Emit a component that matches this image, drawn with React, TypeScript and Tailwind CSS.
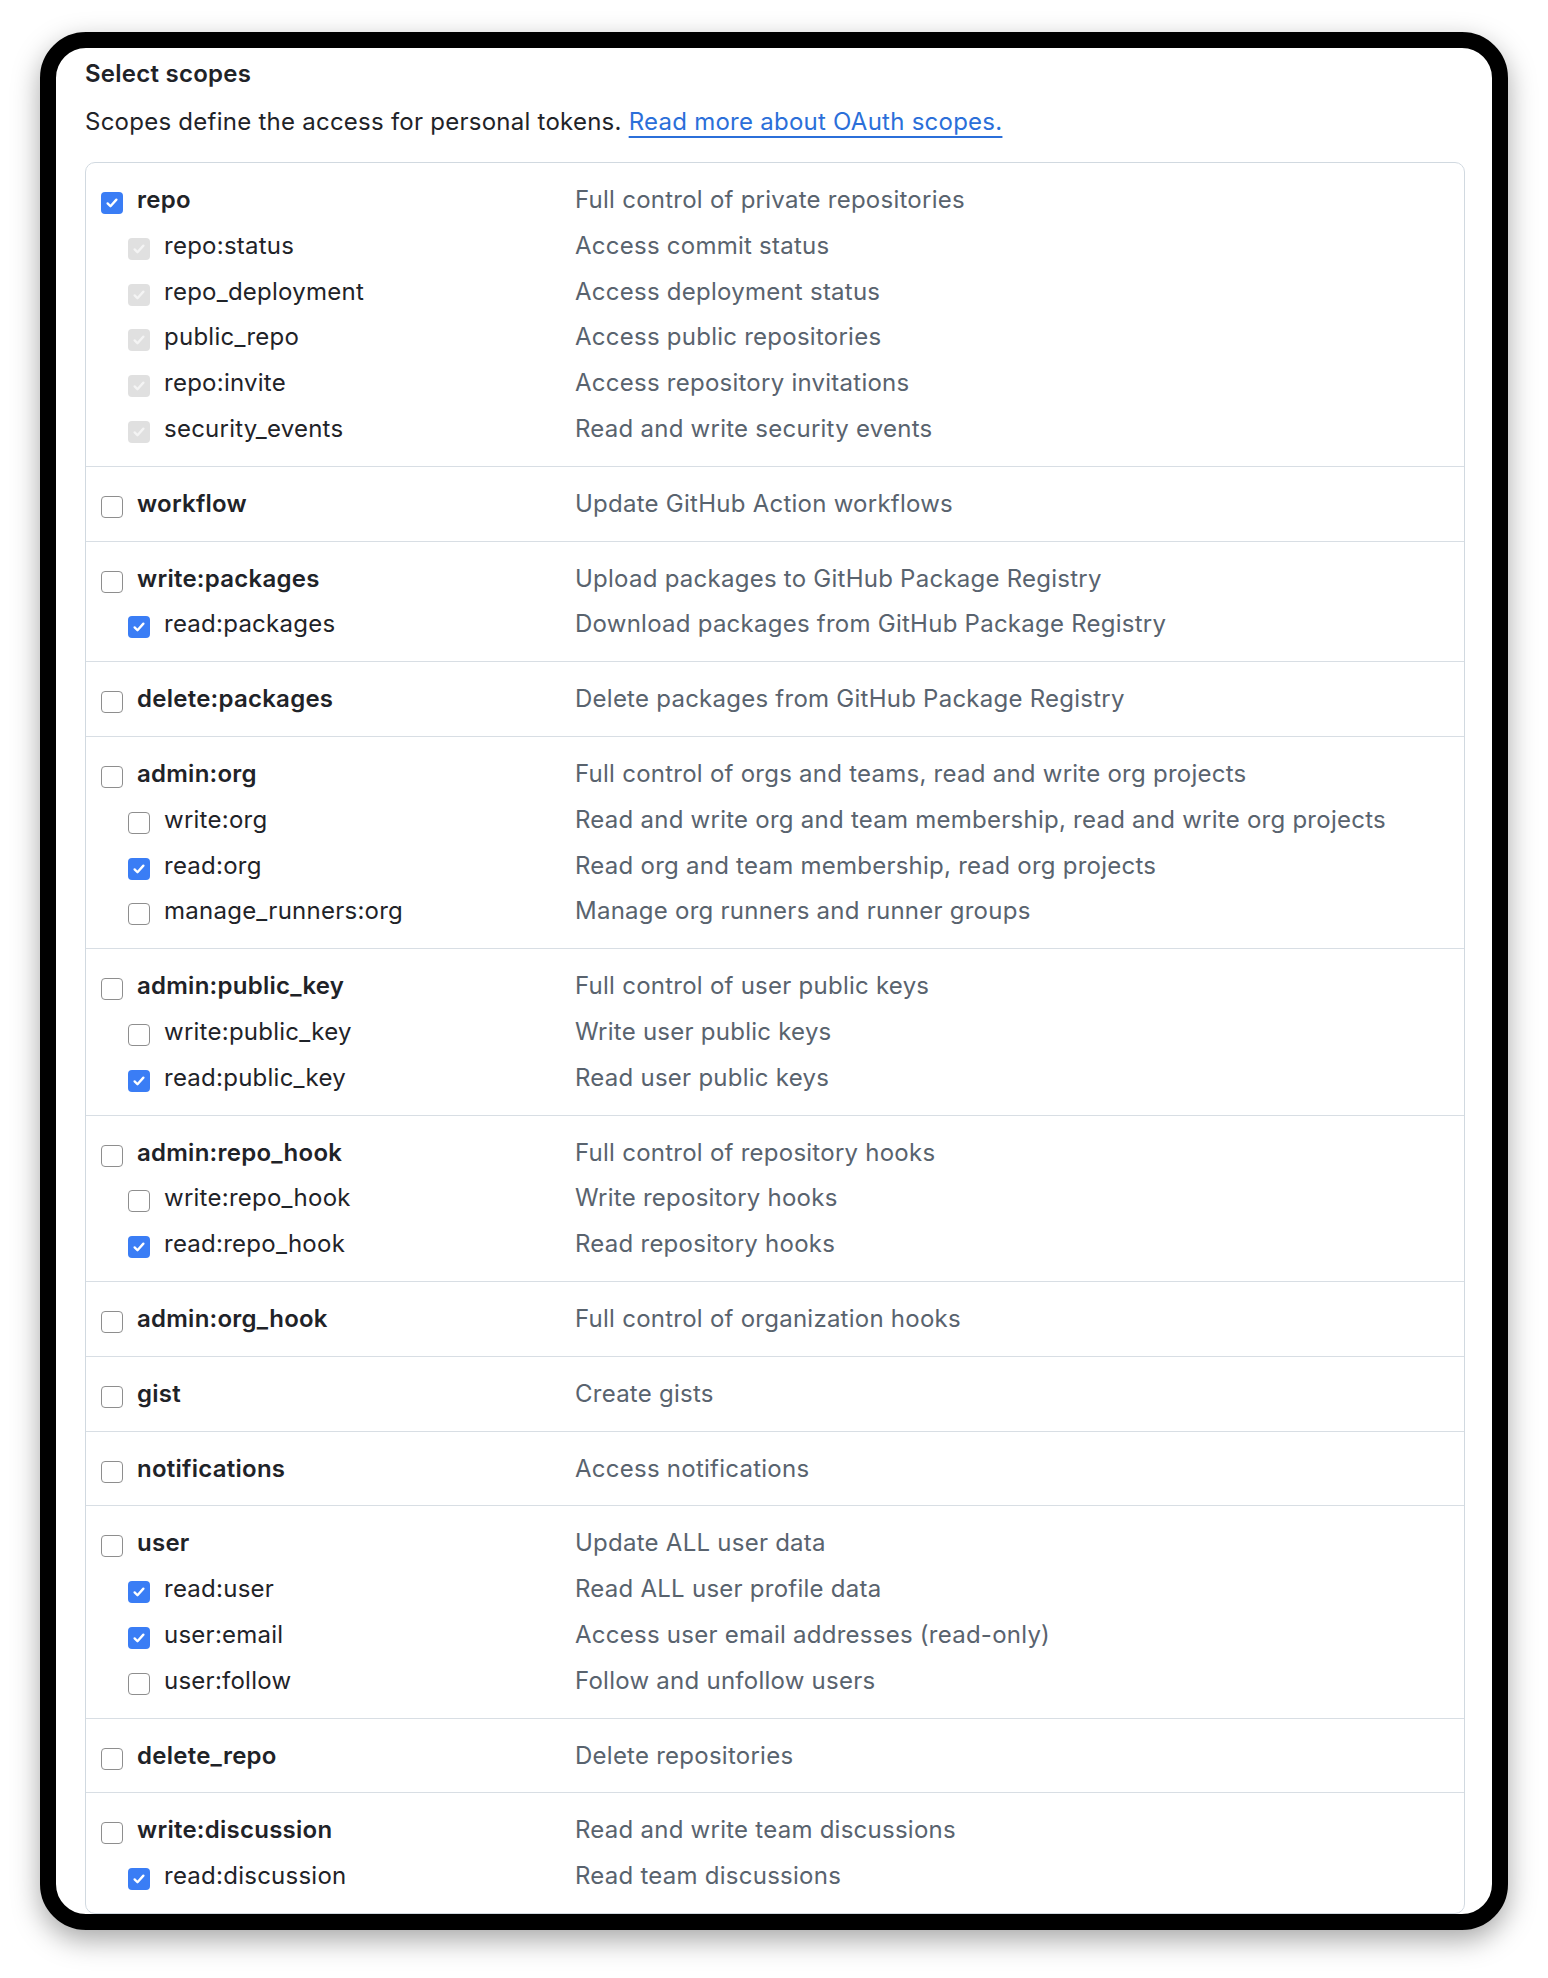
type Scope = {
  name: string;
  desc: string;
  state: 'on' | 'off' | 'locked';
};

type Group = Scope & { children?: Scope[] };

const groups: Group[] = [
  {
    name: 'repo',
    desc: 'Full control of private repositories',
    state: 'on',
    children: [
      { name: 'repo:status', desc: 'Access commit status', state: 'locked' },
      { name: 'repo_deployment', desc: 'Access deployment status', state: 'locked' },
      { name: 'public_repo', desc: 'Access public repositories', state: 'locked' },
      { name: 'repo:invite', desc: 'Access repository invitations', state: 'locked' },
      { name: 'security_events', desc: 'Read and write security events', state: 'locked' },
    ],
  },
  { name: 'workflow', desc: 'Update GitHub Action workflows', state: 'off' },
  {
    name: 'write:packages',
    desc: 'Upload packages to GitHub Package Registry',
    state: 'off',
    children: [{ name: 'read:packages', desc: 'Download packages from GitHub Package Registry', state: 'on' }],
  },
  { name: 'delete:packages', desc: 'Delete packages from GitHub Package Registry', state: 'off' },
  {
    name: 'admin:org',
    desc: 'Full control of orgs and teams, read and write org projects',
    state: 'off',
    children: [
      { name: 'write:org', desc: 'Read and write org and team membership, read and write org projects', state: 'off' },
      { name: 'read:org', desc: 'Read org and team membership, read org projects', state: 'on' },
      { name: 'manage_runners:org', desc: 'Manage org runners and runner groups', state: 'off' },
    ],
  },
  {
    name: 'admin:public_key',
    desc: 'Full control of user public keys',
    state: 'off',
    children: [
      { name: 'write:public_key', desc: 'Write user public keys', state: 'off' },
      { name: 'read:public_key', desc: 'Read user public keys', state: 'on' },
    ],
  },
  {
    name: 'admin:repo_hook',
    desc: 'Full control of repository hooks',
    state: 'off',
    children: [
      { name: 'write:repo_hook', desc: 'Write repository hooks', state: 'off' },
      { name: 'read:repo_hook', desc: 'Read repository hooks', state: 'on' },
    ],
  },
  { name: 'admin:org_hook', desc: 'Full control of organization hooks', state: 'off' },
  { name: 'gist', desc: 'Create gists', state: 'off' },
  { name: 'notifications', desc: 'Access notifications', state: 'off' },
  {
    name: 'user',
    desc: 'Update ALL user data',
    state: 'off',
    children: [
      { name: 'read:user', desc: 'Read ALL user profile data', state: 'on' },
      { name: 'user:email', desc: 'Access user email addresses (read-only)', state: 'on' },
      { name: 'user:follow', desc: 'Follow and unfollow users', state: 'off' },
    ],
  },
  { name: 'delete_repo', desc: 'Delete repositories', state: 'off' },
  {
    name: 'write:discussion',
    desc: 'Read and write team discussions',
    state: 'off',
    children: [{ name: 'read:discussion', desc: 'Read team discussions', state: 'on' }],
  },
];

function Checkbox({ state }: { state: Scope['state'] }) {
  if (state === 'off') {
    return <span className="mt-[15px] h-[22px] w-[22px] shrink-0 rounded-[4px] border-[1.5px] border-[#8e8e8e] bg-white" />;
  }
  const locked = state === 'locked';
  return (
    <span
      className={`mt-[15px] flex h-[22px] w-[22px] shrink-0 items-center justify-center rounded-[4px] ${
        locked ? 'bg-[#e0e0e0]' : 'bg-[#3a7df5]'
      }`}
    >
      <svg viewBox="0 0 20 20" className="h-[16px] w-[16px]" fill="none">
        <path
          d="M4.5 10.5l3.6 3.6L15.5 5.8"
          stroke={locked ? '#f4f4f4' : '#ffffff'}
          strokeWidth="2.9"
          strokeLinecap="round"
          strokeLinejoin="round"
        />
      </svg>
    </span>
  );
}

function Row({ scope, child }: { scope: Scope; child?: boolean }) {
  return (
    <div className="flex h-[45.8px] items-start">
      <div className={`flex w-[474px] shrink-0 items-start ${child ? 'pl-[27px]' : ''}`}>
        <Checkbox state={scope.state} />
        <span className={`ml-[14px] leading-[45.8px] ${child ? 'font-normal' : 'font-semibold'} text-[#1f2328]`}>
          {scope.name}
        </span>
      </div>
      <span className="leading-[45.8px] text-[#59636e]">{scope.desc}</span>
    </div>
  );
}

export default function App() {
  return (
    <div className="min-h-[1978px] bg-white px-[40px] pt-[32px]" style={{ fontFamily: 'Inter, "Noto Sans", sans-serif' }}>
      <div className="h-[1898px] overflow-hidden rounded-[46px] border-[16px] border-black bg-white shadow-[0_10px_28px_rgba(0,0,0,0.35)]">
        <div className="pl-[29px] pr-[27px] pt-[9px] text-[24px] tracking-[0.25px]">
          <h2 className="font-semibold leading-[34px] text-[#1f2328]">Select scopes</h2>
          <p className="mt-[14px] leading-[34px] text-[#1f2328]">
            Scopes define the access for personal tokens.{' '}
            <a href="#" className="text-[#2b6fd9] underline decoration-[1.5px] underline-offset-[6px]">
              Read more about OAuth scopes.
            </a>
          </p>
          <div className="mt-[23px] rounded-[10px] border border-[#d1d9e0]">
            {groups.map((g, i) => (
              <div key={g.name} className={`px-[15px] py-[14px] ${i > 0 ? 'border-t border-[#d8dee4]' : ''}`}>
                <Row scope={g} />
                {g.children?.map((c) => (
                  <Row key={c.name} scope={c} child />
                ))}
              </div>
            ))}
          </div>
        </div>
      </div>
    </div>
  );
}
